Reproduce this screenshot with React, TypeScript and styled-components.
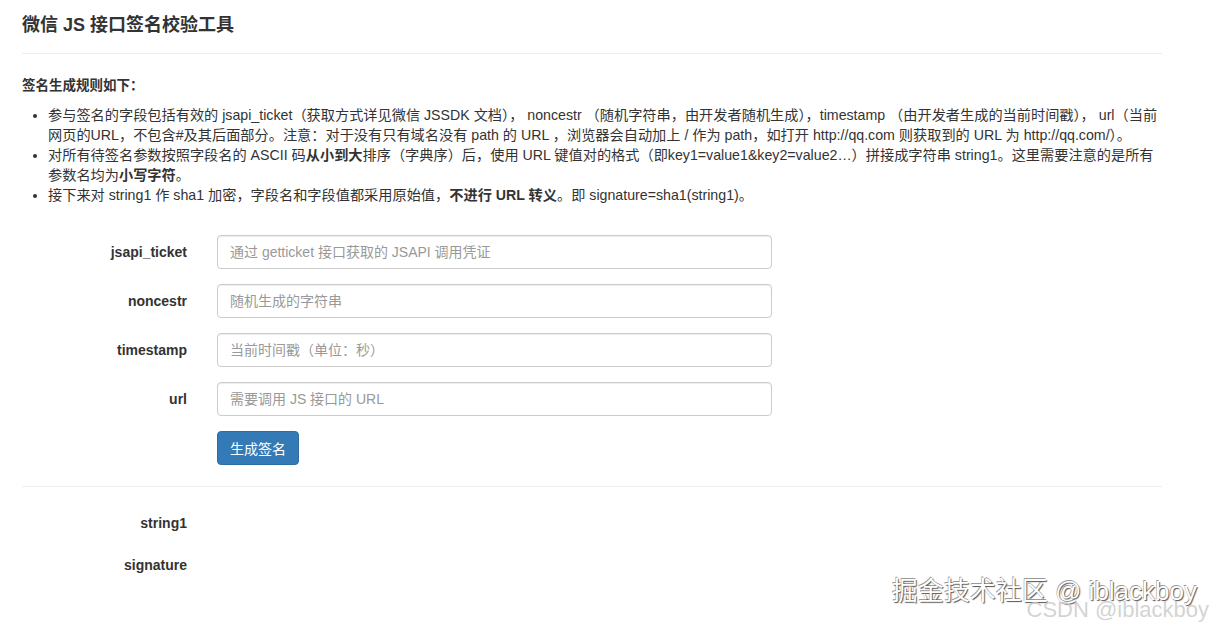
import React from "react";
import styled, { createGlobalStyle } from "styled-components";

const Global = createGlobalStyle`
  html, body { margin: 0; padding: 0; background: #fff; }
  body {
    font-family: "Liberation Sans", Arial, "Noto Sans CJK SC", sans-serif;
    color: #333;
    font-size: 13px;
  }
  * { box-sizing: border-box; }
`;

const Page = styled.div`
  position: relative;
  width: 1213px;
  height: 627px;
  overflow: hidden;
  padding: 0 51px 0 22px;
`;

const Title = styled.h1`
  margin: 0;
  padding-top: 13px;
  height: 53px;
  font-size: 18px;
  font-weight: bold;
  line-height: 24px;
  color: #333;
`;

const Rule = styled.hr`
  margin: 0;
  border: 0;
  border-top: 1px solid #eee;
`;

const SubTitle = styled.p`
  margin: 23px 0 10px;
  font-weight: bold;
  font-size: 13.5px;
  line-height: 18px;
`;

const List = styled.ul`
  margin: 0;
  padding-left: 26px;
  line-height: 20px;
  font-size: 14.2px;
`;

const Item = styled.li`
  line-height: 20px;
`;

const Form = styled.div`
  display: grid;
  grid-template-columns: 165px 555px;
  column-gap: 30px;
  row-gap: 15px;
  margin-top: 30px;
  align-items: center;
`;

const Label = styled.label`
  text-align: right;
  font-weight: bold;
  font-size: 14px;
  color: #333;
`;

const Input = styled.input`
  height: 34px;
  width: 100%;
  padding: 6px 12px;
  border: 1px solid #ccc;
  border-radius: 4px;
  font-family: inherit;
  font-size: 14px;
  color: #555;
  box-shadow: inset 0 1px 1px rgba(0, 0, 0, 0.075);
  &::placeholder { color: #999; }
`;

const Button = styled.button`
  justify-self: start;
  height: 34px;
  padding: 6px 12px;
  background: #337ab7;
  border: 1px solid #2e6da4;
  border-radius: 4px;
  color: #fff;
  font-family: inherit;
  font-size: 14px;
`;

const Divider = styled(Rule)`
  margin-top: 21px;
`;

const Results = styled.div`
  display: grid;
  grid-template-columns: 165px 555px;
  column-gap: 30px;
  row-gap: 22px;
  margin-top: 26px;
`;

const ResultLabel = styled.div`
  text-align: right;
  font-weight: bold;
  font-size: 14px;
  line-height: 20px;
`;

const Watermark = styled.div`
  position: absolute;
  right: 16px;
  top: 575px;
  font-size: 26px;
  line-height: 32px;
  color: #fff;
  text-shadow: 1px 1px 1px #555, -0.6px -0.6px 0 #999;
  font-family: "Liberation Sans", Arial, "Noto Sans CJK SC", sans-serif;
  white-space: nowrap;
`;

const Watermark2 = styled.div`
  position: absolute;
  right: 4px;
  top: 596px;
  font-size: 22px;
  line-height: 28px;
  color: rgba(200, 200, 200, 0.8);
  font-family: "Liberation Sans", Arial, sans-serif;
  white-space: nowrap;
`;

const fields = [
  { name: "jsapi_ticket", ph: "通过 getticket 接口获取的 JSAPI 调用凭证" },
  { name: "noncestr", ph: "随机生成的字符串" },
  { name: "timestamp", ph: "当前时间戳（单位：秒）" },
  { name: "url", ph: "需要调用 JS 接口的 URL" },
];

export default function App() {
  return (
    <Page>
      <Global />
      <Title>微信 JS 接口签名校验工具</Title>
      <Rule />
      <SubTitle>签名生成规则如下：</SubTitle>
      <List>
        <Item>
          参与签名的字段包括有效的 jsapi_ticket（获取方式详见微信 JSSDK 文档）， noncestr （随机字符串，由开发者随机生成），timestamp （由开发者生成的当前时间戳）， url（当前网页的URL，不包含#及其后面部分。注意：对于没有只有域名没有 path 的 URL ，浏览器会自动加上 / 作为 path，如打开 http://qq.com 则获取到的 URL 为 http://qq.com/）。
        </Item>
        <Item>
          对所有待签名参数按照字段名的 ASCII 码<b>从小到大</b>排序（字典序）后，使用 URL 键值对的格式（即key1=value1&amp;key2=value2…）拼接成字符串 string1。这里需要注意的是所有参数名均为<b>小写字符</b>。
        </Item>
        <Item>
          接下来对 string1 作 sha1 加密，字段名和字段值都采用原始值，<b>不进行 URL 转义</b>。即 signature=sha1(string1)。
        </Item>
      </List>
      <Form>
        {fields.map((f) => (
          <React.Fragment key={f.name}>
            <Label>{f.name}</Label>
            <Input placeholder={f.ph} />
          </React.Fragment>
        ))}
        <span />
        <Button>生成签名</Button>
      </Form>
      <Divider />
      <Results>
        <ResultLabel>string1</ResultLabel>
        <div />
        <ResultLabel>signature</ResultLabel>
        <div />
      </Results>
      <Watermark>掘金技术社区 @ iblackboy</Watermark>
      <Watermark2>CSDN @iblackboy</Watermark2>
    </Page>
  );
}
